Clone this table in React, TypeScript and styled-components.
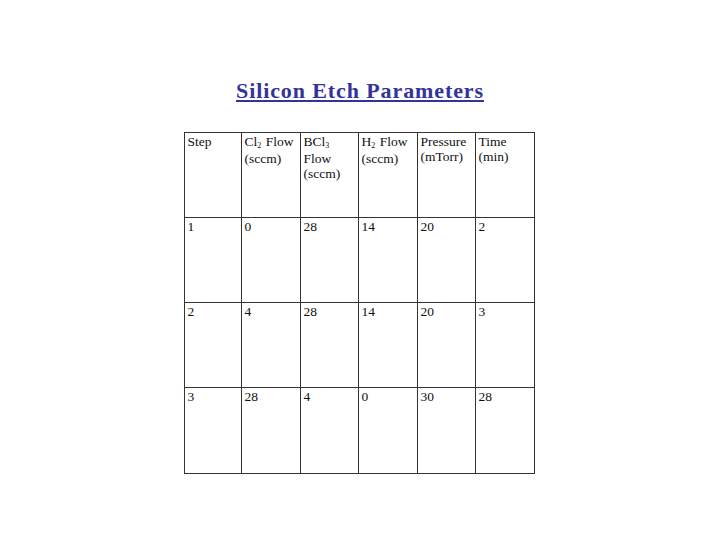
import React from "react";
import styled, { createGlobalStyle } from "styled-components";

const Global = createGlobalStyle`
  html, body { margin: 0; padding: 0; background: #ffffff; }
  body { font-family: "Liberation Serif", "Times New Roman", serif; }
`;

const Page = styled.div`
  width: 720px;
  height: 540px;
  display: flex;
  flex-direction: column;
  align-items: center;
  box-sizing: border-box;
  padding-top: 78px;
`;

const Title = styled.h1`
  margin: 0 0 28px 0;
  font-family: "Liberation Serif", "Times New Roman", serif;
  font-weight: bold;
  font-size: 22px;
  line-height: 26px;
  letter-spacing: 0.9px;
  color: #333399;
  text-decoration: underline;
  text-underline-offset: 2px;
  text-decoration-thickness: 2px;
`;

const Table = styled.table`
  border-collapse: collapse;
  table-layout: fixed;
  margin-right: 2px;
`;

const Cell = styled.td<{ $w: number; $h: number }>`
  width: ${(p) => p.$w}px;
  height: ${(p) => p.$h}px;
  box-sizing: border-box;
  border: 1px solid #333333;
  padding: 1px 3px 0 3px;
  vertical-align: top;
  font-family: "Liberation Serif", "Times New Roman", serif;
  font-size: 13.5px;
  line-height: 15px;
  color: #111111;
`;

const Sub = styled.sub`
  font-size: 8px;
  vertical-align: baseline;
  position: relative;
  top: 2px;
  margin-right: 1px;
`;

const widths = [57, 59, 58, 59, 58, 59];
const heights = [85, 85, 85, 86];

const header: React.ReactNode[] = [
  <>Step</>,
  <>
    Cl<Sub>2</Sub> Flow
    <br />
    (sccm)
  </>,
  <>
    BCl<Sub>3</Sub>
    <br />
    Flow
    <br />
    (sccm)
  </>,
  <>
    H<Sub>2</Sub> Flow
    <br />
    (sccm)
  </>,
  <>
    Pressure
    <br />
    (mTorr)
  </>,
  <>
    Time
    <br />
    (min)
  </>,
];

const rows = [
  ["1", "0", "28", "14", "20", "2"],
  ["2", "4", "28", "14", "20", "3"],
  ["3", "28", "4", "0", "30", "28"],
];

export default function App() {
  return (
    <>
      <Global />
      <Page>
        <Title>Silicon Etch Parameters</Title>
        <Table>
          <tbody>
            <tr>
              {header.map((h, i) => (
                <Cell key={i} $w={widths[i]} $h={heights[0]}>
                  {h}
                </Cell>
              ))}
            </tr>
            {rows.map((r, ri) => (
              <tr key={ri}>
                {r.map((v, ci) => (
                  <Cell key={ci} $w={widths[ci]} $h={heights[ri + 1]}>
                    {v}
                  </Cell>
                ))}
              </tr>
            ))}
          </tbody>
        </Table>
      </Page>
    </>
  );
}
